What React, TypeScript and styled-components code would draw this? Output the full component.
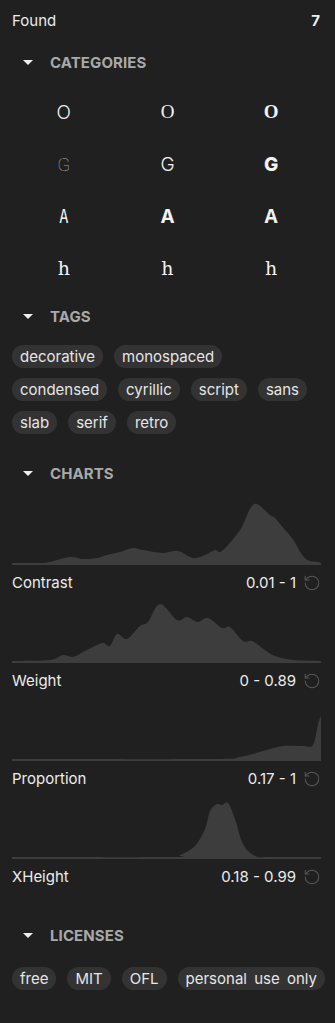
import styled, { createGlobalStyle } from "styled-components";
import { RotateCcw } from "lucide-react";

const GlobalStyle = createGlobalStyle`
  html, body {
    margin: 0;
    padding: 0;
    background: #202020;
  }
  body {
    font-family: Inter, "Noto Sans", sans-serif;
    color: #ececec;
  }
`;

type Pt = [number, number];

// glyphs for the categories grid
const categories = [
  { ch: "O", font: "Inter, sans-serif", weight: 300 },
  { ch: "O", font: "\"Liberation Serif\", serif", weight: 400 },
  { ch: "O", font: "\"Liberation Serif\", serif", weight: 700 },
  { ch: "G", font: "Roboto, sans-serif", weight: 100, dim: true },
  { ch: "G", font: "Inter, sans-serif", weight: 300 },
  { ch: "G", font: "Inter, sans-serif", weight: 800 },
  { ch: "A", font: "\"DejaVu Sans Mono\", monospace", weight: 400, narrow: true },
  { ch: "A", font: "Inter, sans-serif", weight: 700 },
  { ch: "A", font: "\"Open Sans\", sans-serif", weight: 700 },
  { ch: "h", font: "\"DejaVu Serif\", serif", weight: 400 },
  { ch: "h", font: "\"DejaVu Serif\", serif", weight: 400 },
  { ch: "h", font: "\"DejaVu Serif\", serif", weight: 400 },
];

const tags = ["decorative", "monospaced", "condensed", "cyrillic", "script", "sans", "slab", "serif", "retro"];
const licenses = ["free", "MIT", "OFL", "personal use only"];

const charts: { label: string; value: string; pts: Pt[] }[] = [
  {
    label: "Contrast",
    value: "0.01 - 1",
    pts: [[0, 62], [28, 62], [38, 61], [58, 56], [71, 58], [85, 57], [95, 54], [108, 51], [121, 47], [131, 49], [151, 52], [166, 50], [181, 57], [193, 54], [203, 49], [210, 50], [228, 29], [238, 8], [245, 3], [258, 14], [263, 17], [273, 29], [280, 37], [291, 55], [298, 60], [306, 61], [309, 62]],
  },
  {
    label: "Weight",
    value: "0 - 0.89",
    pts: [[0, 62], [38, 61], [51, 56], [61, 58], [71, 53], [81, 48], [91, 44], [98, 47], [105, 35], [115, 40], [128, 27], [136, 23], [148, 5], [165, 21], [175, 18], [186, 23], [196, 19], [210, 29], [218, 28], [231, 42], [240, 42], [253, 51], [263, 57], [281, 61], [309, 62]],
  },
  {
    label: "Proportion",
    value: "0.17 - 1",
    pts: [[0, 62], [198, 62], [228, 60], [258, 52], [271, 49], [291, 49], [301, 48], [306, 27], [309, 19]],
  },
  {
    label: "XHeight",
    value: "0.18 - 0.99",
    pts: [[0, 62], [158, 62], [168, 60], [183, 51], [193, 34], [198, 16], [205, 9], [210, 10], [216, 8], [223, 24], [231, 49], [243, 61], [258, 62], [309, 62]],
  },
];

// catmull-rom -> bezier, closed down to the bottom edge
function areaPath(pts: Pt[], h: number) {
  let d = `M0 ${h} L${pts[0][0]} ${pts[0][1]}`;
  for (let i = 0; i < pts.length - 1; i++) {
    const p0 = pts[i - 1] ?? pts[i];
    const p1 = pts[i];
    const p2 = pts[i + 1];
    const p3 = pts[i + 2] ?? p2;
    const c1x = p1[0] + (p2[0] - p0[0]) / 6;
    const c1y = p1[1] + (p2[1] - p0[1]) / 6;
    const c2x = p2[0] - (p3[0] - p1[0]) / 6;
    const c2y = p2[1] - (p3[1] - p1[1]) / 6;
    d += ` C${c1x.toFixed(1)} ${c1y.toFixed(1)} ${c2x.toFixed(1)} ${c2y.toFixed(1)} ${p2[0]} ${p2[1]}`;
  }
  const last = pts[pts.length - 1];
  d += ` L${last[0]} ${h} Z`;
  return d;
}

const Panel = styled.div`
  width: 335px;
  box-sizing: border-box;
  padding: 0 12px;
`;

const FoundRow = styled.div`
  height: 40px;
  display: flex;
  align-items: center;
  justify-content: space-between;
  font-size: 15px;
  b {
    font-weight: 700;
    margin-right: 3px;
  }
`;

const SectionHeader = styled.div<{ $top: number }>`
  height: 44px;
  margin-top: ${({ $top }) => $top}px;
  display: flex;
  align-items: center;
  padding-left: 11px;
  gap: 17px;
  font-size: 15px;
  font-weight: 700;
  letter-spacing: 0.1px;
  color: #a9a9a9;
  text-transform: uppercase;
`;

const Caret = styled.span`
  width: 0;
  height: 0;
  border-left: 5px solid transparent;
  border-right: 5px solid transparent;
  border-top: 5px solid #f0f0f0;
`;

const Grid = styled.div`
  margin-top: 2px;
  display: grid;
  grid-template-columns: repeat(3, 1fr);
  grid-auto-rows: 52px;
`;

const Glyph = styled.div<{ $font: string; $weight: number; $dim?: boolean; $narrow?: boolean }>`
  display: flex;
  align-items: center;
  justify-content: center;
  font-family: ${({ $font }) => $font};
  font-weight: ${({ $weight }) => $weight};
  font-size: 19px;
  color: ${({ $dim }) => ($dim ? "#a8a8a8" : "#f2f2f2")};
  span {
    display: inline-block;
    transform: ${({ $narrow }) => ($narrow ? "scaleX(0.8)" : "none")};
  }
`;

const Chips = styled.div<{ $top: number }>`
  margin-top: ${({ $top }) => $top}px;
  display: flex;
  flex-wrap: wrap;
  column-gap: 11px;
  row-gap: 10px;
  margin-right: -4px;
`;

const Chip = styled.span`
  height: 23px;
  line-height: 23px;
  padding: 0 8px;
  border-radius: 12px;
  background: #333333;
  font-size: 15px;
  word-spacing: 3px;
  color: #e6e6e6;
  white-space: nowrap;
`;

const ChartList = styled.div`
  margin-top: 6px;
  margin-right: 2px;
`;

const ChartSvg = styled.svg`
  display: block;
  width: 100%;
  height: 64px;
`;

const ChartLabel = styled.div`
  height: 34px;
  box-sizing: border-box;
  padding-top: 8px;
  display: flex;
  justify-content: space-between;
  align-items: flex-start;
  font-size: 15px;
  line-height: 20px;
  color: #ececec;
`;

const ValueWrap = styled.div`
  display: flex;
  align-items: center;
  gap: 7px;
  svg {
    color: #575757;
  }
`;

export default function App() {
  return (
    <>
      <GlobalStyle />
      <Panel>
        <FoundRow>
          <span>Found</span>
          <b>7</b>
        </FoundRow>

        <SectionHeader $top={0}>
          <Caret />
          Categories
        </SectionHeader>
        <Grid>
          {categories.map((c, i) => (
            <Glyph key={i} $font={c.font} $weight={c.weight} $dim={c.dim} $narrow={c.narrow}>
              <span>{c.ch}</span>
            </Glyph>
          ))}
        </Grid>

        <SectionHeader $top={0}>
          <Caret />
          Tags
        </SectionHeader>
        <Chips $top={7}>
          {tags.map((t) => (
            <Chip key={t}>{t}</Chip>
          ))}
        </Chips>

        <SectionHeader $top={17}>
          <Caret />
          Charts
        </SectionHeader>
        <ChartList>
          {charts.map((c) => (
            <div key={c.label}>
              <ChartSvg viewBox="0 0 309 64" preserveAspectRatio="none">
                <path d={areaPath(c.pts, 64)} fill="#3d3d3d" />
              </ChartSvg>
              <ChartLabel>
                <span>{c.label}</span>
                <ValueWrap>
                  <span>{c.value}</span>
                  <RotateCcw size={18} strokeWidth={1.4} />
                </ValueWrap>
              </ChartLabel>
            </div>
          ))}
        </ChartList>

        <SectionHeader $top={20}>
          <Caret />
          Licenses
        </SectionHeader>
        <Chips $top={10}>
          {licenses.map((t) => (
            <Chip key={t}>{t}</Chip>
          ))}
        </Chips>
      </Panel>
    </>
  );
}
